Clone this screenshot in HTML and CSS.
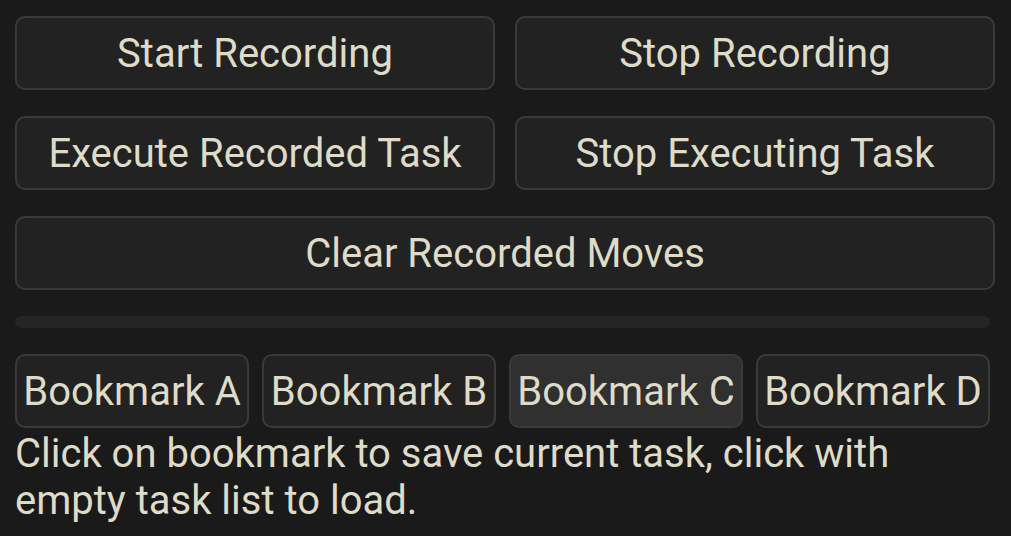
FILE: index.html
```html
<!DOCTYPE html>
<html>
<head>
<meta charset="utf-8">
<link rel="stylesheet" href="styles.css">
</head>
<body>
<div class="panel">
  <div class="row two">
    <button class="btn">Start Recording</button>
    <button class="btn">Stop Recording</button>
  </div>
  <div class="row two">
    <button class="btn">Execute Recorded Task</button>
    <button class="btn">Stop Executing Task</button>
  </div>
  <div class="row">
    <button class="btn wide">Clear Recorded Moves</button>
  </div>
  <div class="progress"></div>
  <div class="bookmarks-block">
    <div class="bookmarks">
      <button class="btn bm">Bookmark A</button>
      <button class="btn bm">Bookmark B</button>
      <button class="btn bm active">Bookmark C</button>
      <button class="btn bm">Bookmark D</button>
    </div>
    <p class="hint">Click on bookmark to save current task, click with empty task list to load.</p>
  </div>
</div>
</body>
</html>
```

FILE: styles.css
```css
html, body {
  margin: 0;
  padding: 0;
  background: #1a1a1a;
}
body {
  font-family: Roboto, "Liberation Sans", sans-serif;
  color: #dedbc8;
}
.panel {
  width: 980px;
  padding: 16px 0 0 15px;
  display: flex;
  flex-direction: column;
  gap: 26px;
}
.row {
  display: flex;
}
.row.two {
  display: grid;
  grid-template-columns: 1fr 1fr;
  gap: 20px;
}
.btn {
  font-family: inherit;
  font-size: 40px;
  line-height: 47px;
  color: #dedbc8;
  background: #222222;
  border: 2px solid #3a3a3a;
  border-radius: 10px;
  padding: 12px 0 11px;
  margin: 0;
  text-align: center;
  white-space: nowrap;
}
.wide {
  flex: 1;
}
.progress {
  width: 975px;
  height: 12px;
  border-radius: 6px;
  background: #252525;
}
.bookmarks-block {
  width: 975px;
}
.bookmarks {
  display: flex;
  gap: 13px;
}
.bm {
  flex: 1;
  padding-left: 0;
  padding-right: 0;
}
.bm.active {
  background: #303030;
}
.hint {
  margin: 2px 0 0 0;
  font-size: 40px;
  line-height: 47px;
  width: 960px;
}
```
